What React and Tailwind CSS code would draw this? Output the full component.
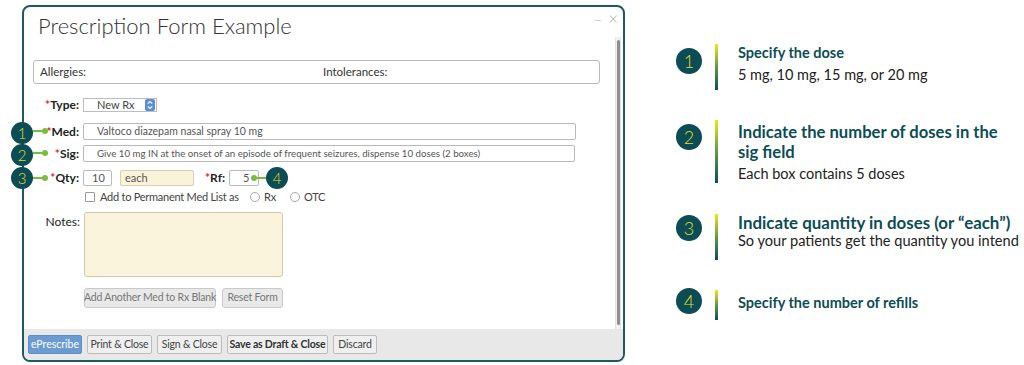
import React from 'react';

const Req = ({ children }) => (
  <span className="font-bold text-[#222]">
    <span className="text-[#e0262b]">*</span>
    {children}
  </span>
);

const Field = ({ className = '', children }) => (
  <div className={`h-full border border-[#b9b9b9] rounded-[2px] flex items-center text-[#555] whitespace-nowrap overflow-hidden ${className}`}>
    {children}
  </div>
);

const Row = ({ label, className = '', children }) => (
  <div className={`flex items-center ${className}`}>
    <div className="w-[56px] text-right text-[12px] leading-none pr-[1px]">{label}</div>
    <div className="ml-[3px] flex items-center h-full">{children}</div>
  </div>
);

const GrayButton = ({ w, bold, children }) => (
  <div
    className={`${w} h-[19px] flex items-center justify-center whitespace-nowrap border border-[#bcbcbc] rounded-[2px] bg-[#efefef] text-[10.5px] tracking-[-0.2px] ${bold ? 'font-bold text-[#333]' : 'text-[#444]'}`}
  >
    {children}
  </div>
);

const Callout = ({ n, className }) => (
  <div
    className={`absolute w-[22px] h-[22px] rounded-full bg-[#0c4d55] text-[#e2dd22] text-[15px] font-light leading-none flex items-center justify-center ${className}`}
  >
    {n}
  </div>
);

const Pin = ({ className }) => (
  <div className={`absolute flex items-center ${className}`}>
    <div className="w-[10px] h-[2px] bg-[#78bd3f]" />
    <div className="w-[6px] h-[6px] rounded-full bg-[#78bd3f] -ml-[1px]" />
  </div>
);

const Step = ({ n, circleTop, height, className = '', children }) => (
  <div className={`flex ${className}`} style={{ height }}>
    <div className="w-[26px]">
      <div
        className="w-[26px] h-[26px] rounded-full bg-[#0c4d55] text-[#e2dd22] text-[18px] font-light leading-none flex items-center justify-center"
        style={{ marginTop: circleTop }}
      >
        {n}
      </div>
    </div>
    <div className="ml-[13px] w-[3px] h-full bg-linear-to-b from-[#f4e600] via-[#5f9b3c] to-[#0c4d55]" />
    <div className="ml-[20px]">{children}</div>
  </div>
);

export default function App() {
  return (
    <div className="relative w-[1024px] h-[365px] bg-white flex overflow-hidden font-['Lato',sans-serif]">
      {/* form window */}
      <div className="pl-[22px] pt-[5px]">
        <div className="w-[603px] h-[357px] border-2 border-[#1d5a61] rounded-[8px] flex flex-col overflow-hidden">
          <div className="h-[30px] flex justify-between shrink-0">
            <div className="pl-[14px] pt-[5px] text-[22px] leading-[28px] font-light text-[#333] whitespace-nowrap">
              Prescription Form Example
            </div>
            <div className="flex items-start gap-[6px] pr-[5px] pt-[2px] text-[#b0b0b0] font-light leading-none">
              <span className="text-[15px] mt-[3px]">–</span>
              <span className="text-[17px] mt-[1px]">×</span>
            </div>
          </div>

          <div className="flex-1 flex">
            <div className="flex-1 flex flex-col pt-[23px]">
              <div className="ml-[9px] w-[567px] h-[24px] border border-[#b8b8b8] rounded-[3px] flex items-center text-[11.5px] text-[#333]">
                <span className="pl-[6px] w-[289px]">Allergies:</span>
                <span>Intolerances:</span>
              </div>

              <Row label={<Req>Type:</Req>} className="h-[14px] mt-[14px]">
                <div className="w-[74px] h-[14px] border border-[#bdbdbd] bg-white flex items-center text-[11px] text-[#444]">
                  <span className="pl-[13px] flex-1">New Rx</span>
                  <svg width="10" height="12" viewBox="0 0 10 12" className="mr-[1px]">
                    <rect x="0" y="0" width="10" height="12" rx="2" fill="#5a8fd8" />
                    <path d="M2.8 4.6 L5 2.6 L7.2 4.6" stroke="#fff" strokeWidth="1.2" fill="none" />
                    <path d="M2.8 7.4 L5 9.4 L7.2 7.4" stroke="#fff" strokeWidth="1.2" fill="none" />
                  </svg>
                </div>
              </Row>

              <Row label={<Req>Med:</Req>} className="h-[17px] mt-[11px]">
                <Field className="w-[493px] pl-[13px] text-[10.5px]">Valtoco diazepam nasal spray 10 mg</Field>
              </Row>

              <Row label={<Req>Sig:</Req>} className="h-[17px] mt-[5px]">
                <Field className="w-[492px] pl-[13px] text-[9.7px]">
                  Give 10 mg IN at the onset of an episode of frequent seizures, dispense 10 doses (2 boxes)
                </Field>
              </Row>

              <Row label={<Req>Qty:</Req>} className="h-[16px] mt-[8px]">
                <Field className="w-[29px] pl-[8px] text-[11px] text-[#444]">10</Field>
                <Field className="w-[74px] ml-[8px] pl-[4px] text-[11px] bg-[#fbf3d9] border-[#d6cfb3] text-[#8c8066]">each</Field>
                <span className="ml-[11px] w-[23px] text-[12px]">
                  <Req>Rf:</Req>
                </span>
                <Field className="w-[30px] pl-[13px] ml-[1px] text-[11px] text-[#444]">5</Field>
              </Row>

              <div className="flex items-center h-[14px] mt-[4px] pl-[61px] text-[11px] tracking-[-0.25px] text-[#444] whitespace-nowrap">
                <div className="w-[10px] h-[10px] border border-[#9a9a9a] rounded-[1px] bg-white" />
                <span className="ml-[5px] w-[134px]">Add to Permanent Med List as</span>
                <div className="ml-[16px] w-[10px] h-[10px] border border-[#a9a9a9] rounded-full" />
                <span className="ml-[4px] w-[22px]">Rx</span>
                <div className="ml-[4px] w-[10px] h-[10px] border border-[#a9a9a9] rounded-full" />
                <span className="ml-[4px]">OTC</span>
              </div>

              <div className="flex mt-[8px]">
                <div className="w-[56px] text-right text-[12px] text-[#222] pt-[1px]">Notes:</div>
                <div className="ml-[4px] w-[199px] h-[65px] bg-[#fbf4dc] border border-[#cfc9b2] rounded-[3px]" />
              </div>

              <div className="flex gap-[6px] mt-[11px] pl-[60px] text-[10.5px] tracking-[-0.2px] text-[#777] whitespace-nowrap">
                <div className="w-[132px] h-[20px] flex items-center justify-center bg-[#e9e9e9] border border-[#c9c9c9] rounded-[3px]">
                  Add Another Med to Rx Blank
                </div>
                <div className="w-[61px] h-[20px] flex items-center justify-center bg-[#e9e9e9] border border-[#c9c9c9] rounded-[3px]">
                  Reset Form
                </div>
              </div>
            </div>

            <div className="w-[6px] mr-[2px] bg-[#f1f1f1] border-x border-[#e2e2e2] flex justify-center">
              <div className="w-[3px] mt-[3px] mb-[4px] bg-[#8e8e8e] rounded-full" />
            </div>
          </div>

          <div className="h-[31px] shrink-0 bg-[#e8e8e8] flex items-start gap-[5px] pl-[4px] pt-[6px]">
            <div className="w-[54px] h-[19px] flex items-center justify-center rounded-[2px] bg-[#6b9bd2] border border-[#5f8ec7] text-[10.5px] text-white">
              ePrescribe
            </div>
            <GrayButton w="w-[65px]">Print &amp; Close</GrayButton>
            <GrayButton w="w-[65px]">Sign &amp; Close</GrayButton>
            <GrayButton w="w-[101px]" bold>Save as Draft &amp; Close</GrayButton>
            <GrayButton w="w-[44px]">Discard</GrayButton>
          </div>
        </div>
      </div>

      {/* callouts over the form */}
      <Pin className="left-[33px] top-[128px]" />
      <Pin className="left-[33px] top-[150px]" />
      <Pin className="left-[33px] top-[175px]" />
      <Callout n="1" className="left-[11px] top-[122px]" />
      <Callout n="2" className="left-[11px] top-[144px]" />
      <Callout n="3" className="left-[11px] top-[167px]" />
      <div className="absolute left-[251px] top-[175px] flex items-center">
        <div className="w-[6px] h-[6px] rounded-full bg-[#78bd3f]" />
        <div className="w-[12px] h-[2px] bg-[#78bd3f] -ml-[1px]" />
      </div>
      <Callout n="4" className="left-[266px] top-[167px]" />

      {/* steps */}
      <div className="ml-[51px] pt-[44px] flex flex-col text-[#222]">
        <Step n="1" circleTop={4} height={46}>
          <div className="text-[14.5px] leading-[18px] font-bold text-[#0c4d55]">Specify the dose</div>
          <div className="mt-[3px] text-[14.5px] leading-[20px] whitespace-nowrap">5 mg, 10 mg, 15 mg, or 20 mg</div>
        </Step>
        <Step n="2" circleTop={4} height={63} className="mt-[30px]">
          <div className="pt-[2px] text-[16.6px] leading-[20px] font-bold text-[#0c4d55] whitespace-nowrap">
            Indicate the number of doses in the
            <br />
            sig field
          </div>
          <div className="mt-[2px] text-[14.5px] leading-[20px] whitespace-nowrap">Each box contains 5 doses</div>
        </Step>
        <Step n="3" circleTop={1} height={46} className="mt-[31px]">
          <div className="text-[16.9px] leading-[18px] font-bold text-[#0c4d55] whitespace-nowrap">
            Indicate quantity in doses (or “each”)
          </div>
          <div className="text-[14.6px] leading-[18px] whitespace-nowrap">So your patients get the quantity you intend</div>
        </Step>
        <Step n="4" circleTop={-2} height={30} className="mt-[30px]">
          <div className="pt-[4px] text-[14.5px] leading-[18px] font-bold text-[#0c4d55] whitespace-nowrap">
            Specify the number of refills
          </div>
        </Step>
      </div>
    </div>
  );
}
